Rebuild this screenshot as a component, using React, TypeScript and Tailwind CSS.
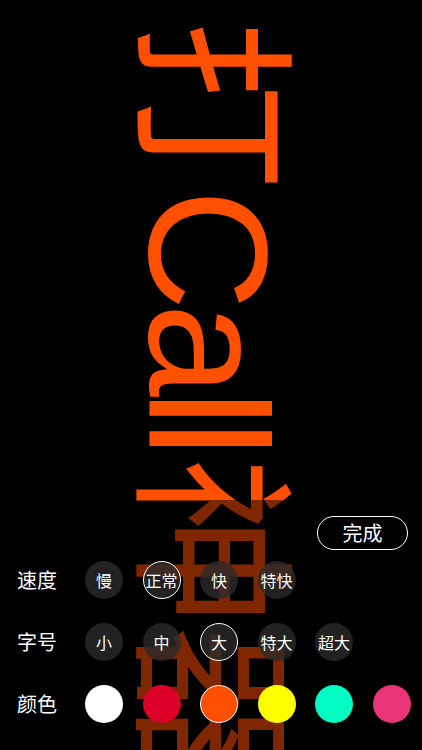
import { useState } from "react";

const speeds = ["慢", "正常", "快", "特快"];
const sizes = ["小", "中", "大", "特大", "超大"];
const colors = ["#ffffff", "#dc0026", "#ff4f00", "#ffff00", "#00fcc2", "#ea3578"];

const cjk = { fontFamily: '"Noto Sans CJK SC", "Noto Sans", sans-serif' };

function Row({ label, children }: { label: string; children: React.ReactNode }) {
  return (
    <div className="flex h-[38px] items-center pl-[17px]">
      <span className="w-[68px] text-[20px] leading-none text-white">{label}</span>
      <div className="flex items-center gap-[19.5px]">{children}</div>
    </div>
  );
}

export default function App() {
  const [speed, setSpeed] = useState(1);
  const [size, setSize] = useState(2);
  const [color, setColor] = useState(2);

  return (
    <div className="relative h-[750px] w-full overflow-hidden bg-black" style={cjk}>
      {/* the marquee text, turned on its side */}
      <div
        className="absolute top-[21px] left-[292px] origin-top-left rotate-90 text-[168px] leading-none whitespace-nowrap"
        style={{ color: colors[color], fontFamily: '"Liberation Sans", "Noto Sans CJK SC", sans-serif' }}
      >
        打<span className="tracking-[-7px]">Cal</span>l神器
      </div>

      <div className="absolute inset-x-0 bottom-0 flex h-[250px] flex-col bg-black/50">
        <div className="flex justify-end pt-4 pr-[14px]">
          <button
            type="button"
            className="flex h-[34px] w-[91px] items-center justify-center rounded-full border border-white text-[20px] leading-none text-white"
          >
            完成
          </button>
        </div>
        <div className="mt-[11px] flex flex-col gap-[24px]">
          <Row label="速度">
            {speeds.map((s, i) => (
              <button
                key={s}
                type="button"
                onClick={() => setSpeed(i)}
                className={
                  "flex size-[38px] items-center justify-center rounded-full bg-[#2a2a2a]/80 text-[16px] leading-none text-white " +
                  (speed === i ? "border border-white" : "")
                }
              >
                {s}
              </button>
            ))}
          </Row>
          <Row label="字号">
            {sizes.map((s, i) => (
              <button
                key={s}
                type="button"
                onClick={() => setSize(i)}
                className={
                  "flex size-[38px] items-center justify-center rounded-full bg-[#2a2a2a]/80 text-[16px] leading-none text-white " +
                  (size === i ? "border border-white" : "")
                }
              >
                {s}
              </button>
            ))}
          </Row>
          <Row label="颜色">
            {colors.map((c, i) => (
              <button
                key={c}
                type="button"
                onClick={() => setColor(i)}
                className={"size-[38px] rounded-full " + (color === i ? "border border-white" : "")}
                style={{ backgroundColor: c }}
              />
            ))}
          </Row>
        </div>
      </div>
    </div>
  );
}
